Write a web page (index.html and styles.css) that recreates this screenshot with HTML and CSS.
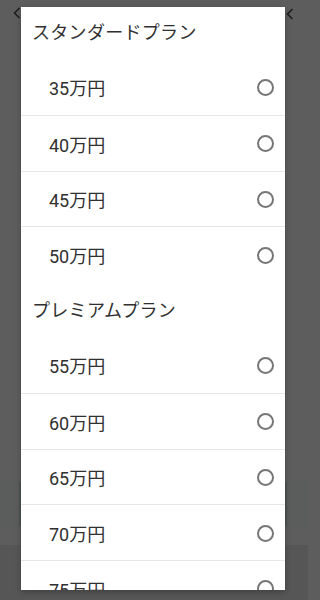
FILE: index.html
```html
<!DOCTYPE html>
<html lang="ja">
<head>
<meta charset="utf-8">
<link rel="stylesheet" href="styles.css">
</head>
<body>
<div class="backdrop">
  <div class="under-button"></div>
  <div class="under-bottom"></div>
  <svg class="chev chev-left" width="8" height="12" viewBox="0 0 8 12"><polyline points="6.5,1 1.5,6 6.5,11" fill="none" stroke="#1e1e1e" stroke-width="1.6"/></svg>
  <svg class="chev chev-right" width="8" height="12" viewBox="0 0 8 12"><polyline points="6.5,1 1.5,6 6.5,11" fill="none" stroke="#1e1e1e" stroke-width="1.6"/></svg>

  <div class="dialog">
    <div class="group">
      <div class="group-title first">スタンダードプラン</div>
      <div class="option"><span class="label">35万円</span><span class="radio"></span></div>
      <div class="option"><span class="label">40万円</span><span class="radio"></span></div>
      <div class="option"><span class="label">45万円</span><span class="radio"></span></div>
      <div class="option"><span class="label">50万円</span><span class="radio"></span></div>
    </div>
    <div class="group">
      <div class="group-title">プレミアムプラン</div>
      <div class="option"><span class="label">55万円</span><span class="radio"></span></div>
      <div class="option"><span class="label">60万円</span><span class="radio"></span></div>
      <div class="option"><span class="label">65万円</span><span class="radio"></span></div>
      <div class="option"><span class="label">70万円</span><span class="radio"></span></div>
      <div class="option"><span class="label">75万円</span><span class="radio"></span></div>
    </div>
  </div>
</div>
</body>
</html>
```

FILE: styles.css
```css
* { box-sizing: border-box; }
html, body {
  margin: 0;
  padding: 0;
  width: 308px;
  height: 600px;
  overflow: hidden;
  background: #5d5d5d;
}
body {
  font-family: Roboto, "Noto Sans CJK JP", "Noto Sans", sans-serif;
  color: #303030;
}
.backdrop {
  position: relative;
  width: 308px;
  height: 600px;
  padding: 7px 23px 10px 21px;
  background: #5d5d5d;
}
.under-button {
  position: absolute;
  left: 0;
  right: 0;
  top: 480px;
  height: 48px;
  background: #5b5d5c;
}
.under-button::before,
.under-button::after {
  content: "";
  position: absolute;
  top: 2px;
  bottom: 2px;
  width: 2px;
  background: #4c5450;
}
.under-button::before { left: 19px; }
.under-button::after { right: 21px; }
.under-bottom {
  position: absolute;
  left: 0;
  right: 0;
  top: 545px;
  bottom: 0;
  background: #565656;
}
.chev {
  position: absolute;
  top: 7px;
}
.chev-left { left: 13px; }
.chev-right { left: 286px; top: 8px; }

.dialog {
  position: relative;
  width: 264px;
  height: 583px;
  background: #ffffff;
  overflow: hidden;
  box-shadow: 0 2px 6px rgba(0,0,0,0.25);
}
.group-title {
  height: 55px;
  display: flex;
  align-items: center;
  padding-left: 11px;
  padding-bottom: 2px;
  font-size: 18px;
  color: #303030;
  letter-spacing: 0.3px;
}
.group-title.first {
  height: 52px;
  padding-bottom: 5px;
}
.option {
  height: 55.75px;
  display: flex;
  align-items: center;
  justify-content: space-between;
  padding: 1px 11px 0 28px;
}
.option + .option {
  border-top: 1px solid #e6e6e6;
}
.label {
  font-size: 18px;
  color: #303030;
}
.radio {
  width: 17px;
  height: 17px;
  border: 2px solid #767676;
  border-radius: 50%;
}
```
